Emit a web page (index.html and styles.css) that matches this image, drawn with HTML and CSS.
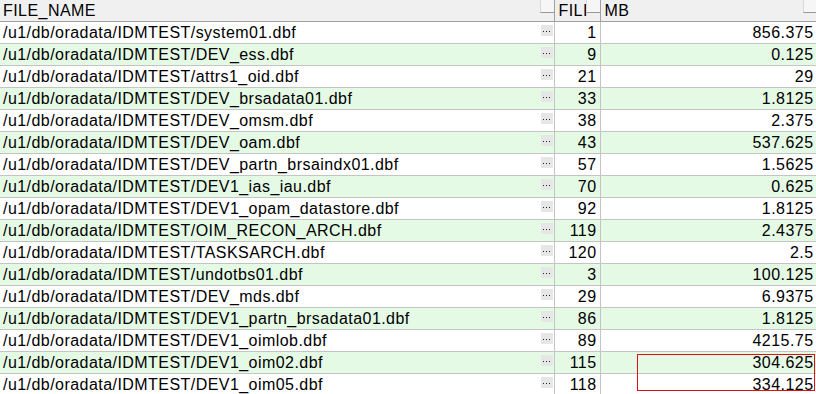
FILE: index.html
```html
<!DOCTYPE html>
<html>
<head>
<meta charset="utf-8">
<link rel="stylesheet" href="styles.css">
</head>
<body>
<table class="grid">
  <colgroup><col class="c-name"><col class="c-fili"><col class="c-mb"></colgroup>
  <thead>
    <tr>
      <th class="name"><span class="label">FILE_NAME</span><span class="sortbox"></span></th>
      <th class="fili"><span class="label">FILI</span><span class="sortbox"></span></th>
      <th class="mb"><span class="label">MB</span><span class="sortbox"></span></th>
    </tr>
  </thead>
  <tbody>
    <tr><td class="name">/u1/db/oradata/IDMTEST/system01.dbf<span class="dots"><i></i></span></td><td class="num">1</td><td class="num">856.375</td></tr>
    <tr class="alt"><td class="name">/u1/db/oradata/IDMTEST/DEV_ess.dbf<span class="dots"><i></i></span></td><td class="num">9</td><td class="num">0.125</td></tr>
    <tr><td class="name">/u1/db/oradata/IDMTEST/attrs1_oid.dbf<span class="dots"><i></i></span></td><td class="num">21</td><td class="num">29</td></tr>
    <tr class="alt"><td class="name">/u1/db/oradata/IDMTEST/DEV_brsadata01.dbf<span class="dots"><i></i></span></td><td class="num">33</td><td class="num">1.8125</td></tr>
    <tr><td class="name">/u1/db/oradata/IDMTEST/DEV_omsm.dbf<span class="dots"><i></i></span></td><td class="num">38</td><td class="num">2.375</td></tr>
    <tr class="alt"><td class="name">/u1/db/oradata/IDMTEST/DEV_oam.dbf<span class="dots"><i></i></span></td><td class="num">43</td><td class="num">537.625</td></tr>
    <tr><td class="name">/u1/db/oradata/IDMTEST/DEV_partn_brsaindx01.dbf<span class="dots"><i></i></span></td><td class="num">57</td><td class="num">1.5625</td></tr>
    <tr class="alt"><td class="name">/u1/db/oradata/IDMTEST/DEV1_ias_iau.dbf<span class="dots"><i></i></span></td><td class="num">70</td><td class="num">0.625</td></tr>
    <tr><td class="name">/u1/db/oradata/IDMTEST/DEV1_opam_datastore.dbf<span class="dots"><i></i></span></td><td class="num">92</td><td class="num">1.8125</td></tr>
    <tr class="alt"><td class="name">/u1/db/oradata/IDMTEST/OIM_RECON_ARCH.dbf<span class="dots"><i></i></span></td><td class="num">119</td><td class="num">2.4375</td></tr>
    <tr><td class="name">/u1/db/oradata/IDMTEST/TASKSARCH.dbf<span class="dots"><i></i></span></td><td class="num">120</td><td class="num">2.5</td></tr>
    <tr class="alt"><td class="name">/u1/db/oradata/IDMTEST/undotbs01.dbf<span class="dots"><i></i></span></td><td class="num">3</td><td class="num">100.125</td></tr>
    <tr><td class="name">/u1/db/oradata/IDMTEST/DEV_mds.dbf<span class="dots"><i></i></span></td><td class="num">29</td><td class="num">6.9375</td></tr>
    <tr class="alt"><td class="name">/u1/db/oradata/IDMTEST/DEV1_partn_brsadata01.dbf<span class="dots"><i></i></span></td><td class="num">86</td><td class="num">1.8125</td></tr>
    <tr><td class="name">/u1/db/oradata/IDMTEST/DEV1_oimlob.dbf<span class="dots"><i></i></span></td><td class="num">89</td><td class="num">4215.75</td></tr>
    <tr class="alt"><td class="name">/u1/db/oradata/IDMTEST/DEV1_oim02.dbf<span class="dots"><i></i></span></td><td class="num">115</td><td class="num">304.625</td></tr>
    <tr><td class="name">/u1/db/oradata/IDMTEST/DEV1_oim05.dbf<span class="dots"><i></i></span></td><td class="num">118</td><td class="num">334.125</td></tr>
  </tbody>
</table>
<div class="selection"></div>
</body>
</html>
```

FILE: styles.css
```css
html, body {
  margin: 0;
  padding: 0;
  background: #ffffff;
  overflow: hidden;
}
body {
  width: 816px;
  height: 394px;
  position: relative;
  font-family: "Liberation Sans", Arial, sans-serif;
  font-size: 16px;
  letter-spacing: 0.45px;
  color: #000;
}
.grid {
  border-collapse: collapse;
  table-layout: fixed;
  width: 817px;
}
.c-name { width: 554px; }
.c-fili { width: 46px; }
.c-mb { width: 217px; }

.grid th {
  height: 21px;
  padding: 0;
  background: #f0f0f0;
  font-weight: normal;
  text-align: left;
  position: relative;
  border-right: 1px solid #a0a0a0;
  border-bottom: 1px solid #a0a0a0;
  vertical-align: middle;
  line-height: 21px;
  overflow: hidden;
  white-space: nowrap;
}
.grid th .label {
  padding-left: 3px;
}
.grid th.fili .label, .grid th.mb .label { padding-left: 4px; }
.sortbox {
  position: absolute;
  top: 0;
  right: 0;
  width: 13px;
  height: 12px;
  background: #f6f6f6;
  border-bottom: 1px solid #9a9a9a;
  border-left: 1px solid #d8d8d8;
}
.grid td {
  height: 21px;
  padding: 0;
  line-height: 21px;
  border-right: 1px solid #c4c4c4;
  border-bottom: 1px solid #c4c4c4;
  white-space: nowrap;
  overflow: hidden;
}
.grid tr.alt td { background: #e5fae5; }
.grid td.name {
  padding-left: 3px;
  position: relative;
}
.grid td.num {
  text-align: right;
  padding-right: 3px;
}
.dots {
  position: absolute;
  right: 1px;
  top: 3px;
  width: 12px;
  height: 11px;
  background: #e6e6e6;
}
.dots i {
  position: absolute;
  left: 2px;
  top: 6px;
  width: 1px;
  height: 1px;
  background: #222;
  box-shadow: 3px 0 0 #222, 6px 0 0 #222;
}
.selection {
  position: absolute;
  left: 637px;
  top: 354px;
  width: 176px;
  height: 35px;
  border: 1px solid #e01010;
  pointer-events: none;
}
```
